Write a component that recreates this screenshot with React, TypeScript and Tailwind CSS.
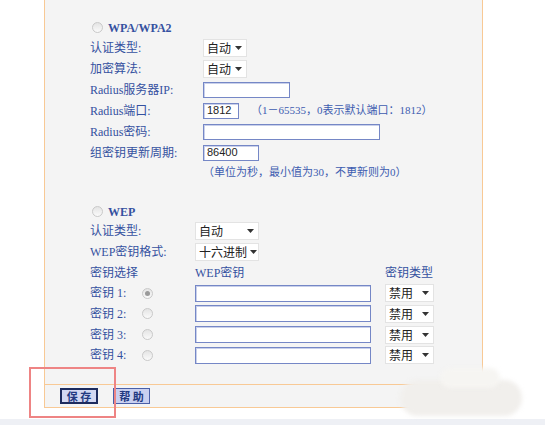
import React from "react";

const LABEL = "whitespace-nowrap text-[12px] leading-none text-[#3551a0]";
const FONT = { fontFamily: '"Liberation Serif", "Noto Sans CJK SC", serif' };

function Radio({ checked = false }: { checked?: boolean }) {
  return (
    <span className="flex h-[11px] w-[11px] items-center justify-center rounded-full border border-[#c9c9c9] bg-gradient-to-b from-[#e4e4e4] to-[#fafafa]">
      {checked && <span className="h-[5px] w-[5px] rounded-full bg-[#9a9a9a]" />}
    </span>
  );
}

function Select({ value, width }: { value: string; width: string }) {
  return (
    <div
      className={`flex h-[18px] items-center justify-between whitespace-nowrap border border-[#e3e3e3] bg-white pl-[3px] pr-[4px] text-[12px] text-[#222] ${width}`}
      style={{ fontFamily: '"Noto Sans CJK SC", sans-serif' }}
    >
      <span className="leading-none">{value}</span>
      <svg width="7" height="4" viewBox="0 0 7 4" className="ml-[3px] shrink-0">
        <path d="M0 0h7L3.5 4z" fill="#333" />
      </svg>
    </div>
  );
}

function Input({ width, value = "" }: { width: string; value?: string }) {
  return (
    <div
      className={`flex h-[16px] items-center border border-[#7587c6] bg-white pl-[3px] text-[11px] text-[#222] shadow-[inset_1px_1px_0_#c9d0ea] ${width}`}
      style={{ fontFamily: '"Liberation Sans", sans-serif' }}
    >
      {value}
    </div>
  );
}

function Row({ label, labelWidth, children }: { label: string; labelWidth: string; children?: React.ReactNode }) {
  return (
    <div className="flex h-[21px] items-center">
      <span className={`${LABEL} ${labelWidth}`} style={FONT}>
        {label}
      </span>
      {children}
    </div>
  );
}

export default function App() {
  const keys = ["1", "2", "3", "4"];
  return (
    <div className="relative flex h-[425px] w-[545px] flex-col overflow-hidden bg-white">
      <div className="ml-[44px] flex h-[408px] w-[439px] flex-col border-x border-b border-[#f8c995] bg-[#f4f4f4]">
        <div className="h-[384px] pl-[45px] pt-[18px]">
          {/* WPA/WPA2 */}
          <div className="flex h-[19px] items-center gap-[5px] pl-[2px]">
            <Radio />
            <span className={`${LABEL} text-[10px] font-bold`} style={FONT}>WPA/WPA2</span>
          </div>
          <Row label="认证类型:" labelWidth="w-[113px]"><Select value="自动" width="w-[44px]" /></Row>
          <Row label="加密算法:" labelWidth="w-[113px]"><Select value="自动" width="w-[44px]" /></Row>
          <Row label="Radius服务器IP:" labelWidth="w-[113px]"><Input width="w-[87px]" /></Row>
          <Row label="Radius端口:" labelWidth="w-[113px]">
            <Input width="w-[36px]" value="1812" />
            <span className="ml-[12px] whitespace-nowrap text-[11px] leading-none text-[#3d5cb0]" style={FONT}>
              （1－65535，0表示默认端口：1812）
            </span>
          </Row>
          <Row label="Radius密码:" labelWidth="w-[113px]"><Input width="w-[177px]" /></Row>
          <Row label="组密钥更新周期:" labelWidth="w-[113px]"><Input width="w-[56px]" value="86400" /></Row>
          <div className="flex h-[19px] items-center pl-[113px]">
            <span className="whitespace-nowrap text-[11px] leading-none text-[#3d5cb0]" style={FONT}>
              （单位为秒，最小值为30，不更新则为0）
            </span>
          </div>

          {/* WEP */}
          <div className="mt-[20px] flex h-[19px] items-center gap-[5px] pl-[2px]">
            <Radio />
            <span className={`${LABEL} text-[10px] font-bold`} style={FONT}>WEP</span>
          </div>
          <div className="flex h-[20.67px] items-center">
            <span className={`${LABEL} w-[105px]`} style={FONT}>认证类型:</span>
            <Select value="自动" width="w-[64px]" />
          </div>
          <div className="flex h-[20.67px] items-center">
            <span className={`${LABEL} w-[105px]`} style={FONT}>WEP密钥格式:</span>
            <Select value="十六进制" width="w-[64px]" />
          </div>
          <div className="flex h-[20.67px] items-center">
            <span className={`${LABEL} w-[105px]`} style={FONT}>密钥选择</span>
            <span className={`${LABEL} w-[190px] text-[11px]`} style={FONT}>WEP密钥</span>
            <span className={LABEL} style={FONT}>密钥类型</span>
          </div>
          {keys.map((k) => (
            <div key={k} className="flex h-[20.67px] items-center">
              <span className={`${LABEL} w-[52px]`} style={FONT}>密钥 {k}:</span>
              <span className="w-[53px]">
                <Radio checked={k === "1"} />
              </span>
              <Input width="w-[176px] h-[17px]" />
              <div className="ml-[14px]">
                <Select value="禁用" width="w-[49px]" />
              </div>
            </div>
          ))}
        </div>

        {/* footer */}
        <div className="flex h-[23px] items-center gap-[15px] border-t border-[#f8c995] pl-[15px]">
          <button
            className="flex h-[16px] w-[38px] items-center justify-center whitespace-nowrap border-2 border-[#1d2b5e] bg-[#d3d8f2] text-[11px] font-bold text-[#233a82]"
            style={{ fontFamily: '"Noto Sans CJK SC", sans-serif' }}
          >
            <span className="leading-none">保&nbsp;存</span>
          </button>
          <button
            className="flex h-[16px] w-[37px] items-center justify-center whitespace-nowrap border border-[#4a5fa8] bg-[#c9d0f0] text-[11px] font-bold text-[#233a82]"
            style={{ fontFamily: '"Noto Sans CJK SC", sans-serif' }}
          >
            <span className="leading-none">帮&nbsp;助</span>
          </button>
        </div>
      </div>
      <div className="h-[11px]" />
      <div className="flex-1 bg-[#eef0f5]" />

      {/* red highlight box */}
      <div className="absolute left-[29px] top-[367px] h-[51px] w-[87px] border-2 border-solid border-[#ee8484]" />
      {/* blurred watermark blob */}
      <div className="absolute left-[400px] top-[380px] h-[36px] w-[122px] rounded-[18px] bg-[#f1efec] blur-[2px]" />
      <div className="absolute left-[440px] top-[368px] h-[20px] w-[60px] rounded-[10px] bg-[#f6f5f2] blur-[2px]" />
    </div>
  );
}
